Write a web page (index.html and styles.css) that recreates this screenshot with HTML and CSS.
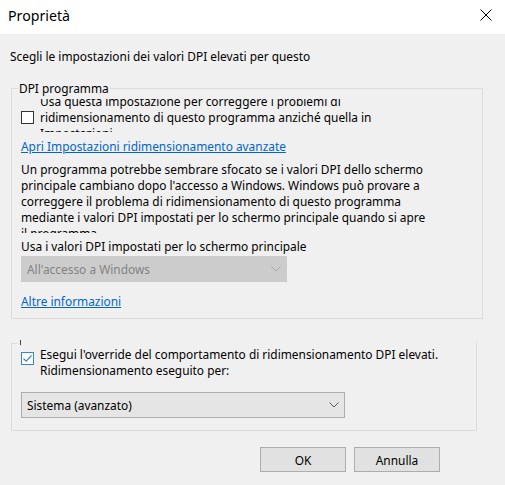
FILE: index.html
```html
<!DOCTYPE html>
<html lang="it">
<head>
  <meta charset="UTF-8" />
  <title>Proprietà</title>
  <link rel="stylesheet" href="styles.css">
</head>
<body>
  <div class="titlebar">
    <span class="title">Proprietà</span>
    <svg class="close" width="12" height="12" viewBox="0 0 12 12"><path d="M0.5 0.5L11.5 11.5M11.5 0.5L0.5 11.5" stroke="#000" stroke-width="1" fill="none"/></svg>
  </div>

  <div class="content">
    <p class="intro">Scegli le impostazioni dei valori DPI elevati per questo</p>

    <fieldset class="group group-dpi">
      <legend>DPI programma</legend>
      <div class="group-body">
        <div class="option option-dpi">
          <span class="check"></span>
          <div class="option-clip">
            <div class="option-text">Usa questa impostazione per correggere i problemi di<br>ridimensionamento di questo programma anziché quella in<br>Impostazioni</div>
          </div>
        </div>
        <a class="link link-open" href="#">Apri Impostazioni ridimensionamento avanzate</a>
        <div class="para-clip">
          <p>Un programma potrebbe sembrare sfocato se i valori DPI dello schermo<br>principale cambiano dopo l'accesso a Windows. Windows può provare a<br>correggere il problema di ridimensionamento di questo programma<br>mediante i valori DPI impostati per lo schermo principale quando si apre<br>il programma.</p>
        </div>
        <div class="label">Usa i valori DPI impostati per lo schermo principale</div>
        <div class="combo combo-disabled">
          <span>All'accesso a Windows</span>
          <svg width="10" height="6" viewBox="0 0 10 6"><path d="M0.5 0.5L5 5L9.5 0.5" stroke="#a6a6a6" fill="none"/></svg>
        </div>
        <a class="link link-more" href="#">Altre informazioni</a>
      </div>
    </fieldset>

    <fieldset class="group group-override">
      <legend><span class="tick"></span></legend>
      <div class="group-body">
        <div class="option option-override">
          <span class="check checked">
            <svg width="11" height="11" viewBox="0 0 11 11"><path d="M1.5 5.5L4.2 8.2L9.5 2.5" stroke="#3b87cf" stroke-width="1.2" fill="none"/></svg>
          </span>
          <div class="option-text">Esegui l'override del comportamento di ridimensionamento DPI elevati.<br>Ridimensionamento eseguito per:</div>
        </div>
        <div class="combo combo-mode">
          <span>Sistema (avanzato)</span>
          <svg width="10" height="6" viewBox="0 0 10 6"><path d="M0.5 0.5L5 5L9.5 0.5" stroke="#555" fill="none"/></svg>
        </div>
      </div>
    </fieldset>

    <div class="buttons">
      <button class="btn">OK</button>
      <button class="btn">Annulla</button>
    </div>
  </div>
</body>
</html>
```

FILE: styles.css
```css
* { box-sizing: border-box; margin: 0; padding: 0; }
html, body { width: 505px; height: 485px; overflow: hidden; }
body { background: #f0f0f0; font-family: "Noto Sans", "Liberation Sans", sans-serif; font-size: 11.9px; line-height: 16px; color: #000; }

.titlebar { height: 34px; background: #fff; display: flex; justify-content: space-between; align-items: flex-start; padding: 6px 13px 0 8px; }
.title { font-size: 14.2px; line-height: 20px; }
.close { margin-top: 3px; }

.intro { margin: 14px 0 0 10px; }

.group { border: 1px solid #dcdcdc; min-width: 0; margin-left: 11px; }
.group legend { margin-left: 6px; padding: 0 1px; line-height: 16px; }
.group-body { padding: 0 0 9px 9px; }
.group-dpi { width: 472px; margin-top: 16px; }
.group-override { width: 466px; margin-top: 21px; }
.group-override legend { height: 7px; width: 458px; padding: 0 2px; }
.group-override .group-body { padding-bottom: 12px; }
.tick { display: block; width: 1px; height: 5px; background: #444; }

.option { display: flex; align-items: flex-start; }
.option-dpi { margin-top: 3px; }
.option-clip { height: 33px; overflow: hidden; }
.option-dpi .option-text { margin-top: -6px; }
.option-dpi .check { margin-top: 12px; }
.option-override { margin-top: -1px; }
.option-override .check { margin-top: 6px; }

.check { flex: none; width: 13px; height: 13px; border: 1px solid #333; background: #fff; margin-right: 6px; }
.check.checked { border-color: #3b87cf; }
.check svg { display: block; }

.link { display: block; width: fit-content; color: #0066cc; text-decoration: underline; }
.link-open { margin-top: 6px; }
.link-more { margin-top: 11px; }

.para-clip { margin-top: 7px; height: 72px; overflow: hidden; }
.label { margin-top: 5px; }

.combo { display: flex; align-items: center; justify-content: space-between; height: 26px; padding: 0 5px; border: 1px solid #adadad; background: #e5e5e5; }
.combo svg { display: block; }
.combo-disabled { width: 266px; margin-top: 2px; background: #cccccc; border-color: #cccccc; color: #838383; }
.combo-mode { width: 324px; margin-top: 14px; }

.buttons { display: flex; justify-content: flex-end; gap: 8px; margin-top: 16px; padding-right: 65px; }
.btn { width: 86px; height: 25px; border: 1px solid #adadad; background: #e1e1e1; font: inherit; color: #000; }
```
